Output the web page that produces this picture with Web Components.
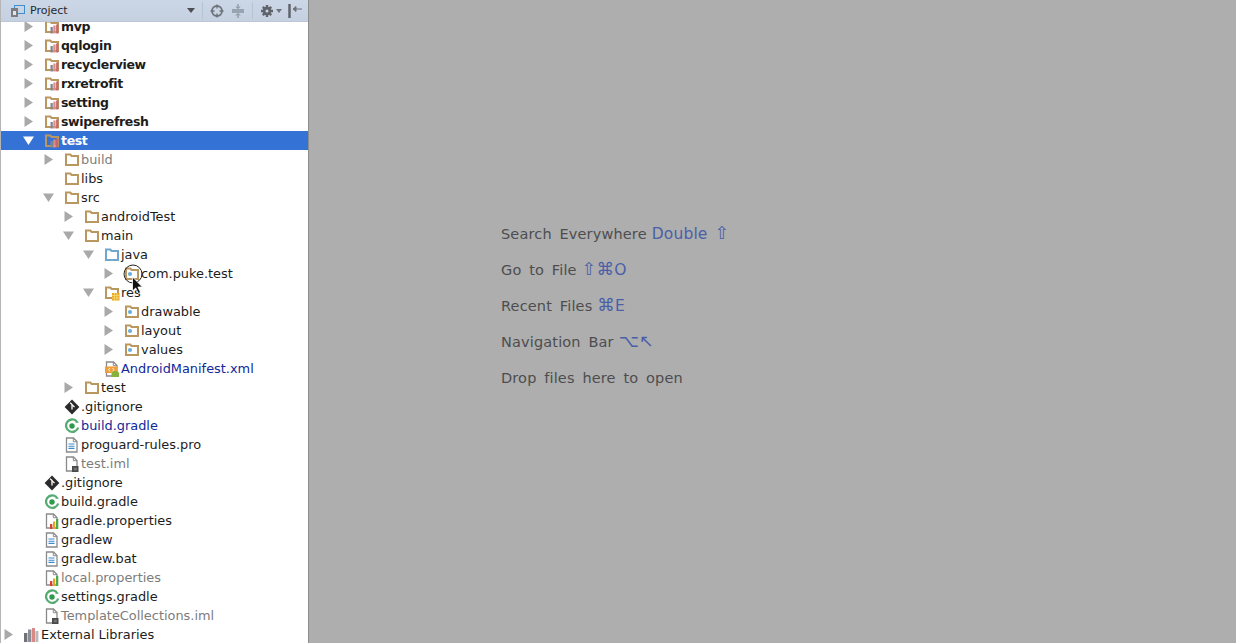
<!DOCTYPE html>
<html>
<head>
<meta charset="utf-8">
<title>Project</title>
<style>
html, body { margin: 0; height: 100%; overflow: hidden; background: #aeaeae; }
</style>
</head>
<body>
<ide-window>
  <project-panel>
    <tree-row depth="1" arrow="right" icon="module" bold>mvp</tree-row>
    <tree-row depth="1" arrow="right" icon="module" bold>qqlogin</tree-row>
    <tree-row depth="1" arrow="right" icon="module" bold>recyclerview</tree-row>
    <tree-row depth="1" arrow="right" icon="module" bold>rxretrofit</tree-row>
    <tree-row depth="1" arrow="right" icon="module" bold>setting</tree-row>
    <tree-row depth="1" arrow="right" icon="module" bold>swiperefresh</tree-row>
    <tree-row depth="1" arrow="down" icon="module" bold selected>test</tree-row>
    <tree-row depth="2" arrow="right" icon="folder" tone="muted">build</tree-row>
    <tree-row depth="2" icon="folder">libs</tree-row>
    <tree-row depth="2" arrow="down" icon="folder">src</tree-row>
    <tree-row depth="3" arrow="right" icon="folder">androidTest</tree-row>
    <tree-row depth="3" arrow="down" icon="folder">main</tree-row>
    <tree-row depth="4" arrow="down" icon="source">java</tree-row>
    <tree-row depth="5" arrow="right" icon="package">com.puke.test</tree-row>
    <tree-row depth="4" arrow="down" icon="res">res</tree-row>
    <tree-row depth="5" arrow="right" icon="package">drawable</tree-row>
    <tree-row depth="5" arrow="right" icon="package">layout</tree-row>
    <tree-row depth="5" arrow="right" icon="package">values</tree-row>
    <tree-row depth="4" icon="manifest" tone="blue">AndroidManifest.xml</tree-row>
    <tree-row depth="3" arrow="right" icon="folder">test</tree-row>
    <tree-row depth="2" icon="git">.gitignore</tree-row>
    <tree-row depth="2" icon="gradle" tone="blue">build.gradle</tree-row>
    <tree-row depth="2" icon="text">proguard-rules.pro</tree-row>
    <tree-row depth="2" icon="iml" tone="muted">test.iml</tree-row>
    <tree-row depth="1" icon="git">.gitignore</tree-row>
    <tree-row depth="1" icon="gradle">build.gradle</tree-row>
    <tree-row depth="1" icon="props">gradle.properties</tree-row>
    <tree-row depth="1" icon="text">gradlew</tree-row>
    <tree-row depth="1" icon="text">gradlew.bat</tree-row>
    <tree-row depth="1" icon="props" tone="muted">local.properties</tree-row>
    <tree-row depth="1" icon="gradle">settings.gradle</tree-row>
    <tree-row depth="1" icon="iml" tone="muted">TemplateCollections.iml</tree-row>
    <tree-row depth="0" arrow="right" icon="libs">External Libraries</tree-row>
  </project-panel>
  <welcome-pane>
    <hint-line key-text="Double ⇧">Search Everywhere</hint-line>
    <hint-line key-text="⇧⌘O">Go to File</hint-line>
    <hint-line key-text="⌘E">Recent Files</hint-line>
    <hint-line key-text="⌥↖">Navigation Bar</hint-line>
    <hint-line>Drop files here to open</hint-line>
  </welcome-pane>
</ide-window>

<script>
const UI_FONT = '"DejaVu Sans", "Liberation Sans", sans-serif';

// every tree icon is drawn in a 16x16 box
const FOLDER = (c) => `<path d="M2 4V2.500h4.300l1.300 1.500H14v9H2z" fill="none" stroke="${c}" stroke-width="2"/>`;
const PAGE = `<path d="M2.500 1h7l3.500 3.500V15H2.500z" fill="#fff" stroke="#8a8a8a" stroke-width="1.300"/><path d="M9.300 1v3.700H13" fill="none" stroke="#8a8a8a"/>`;
const ICONS = {
  folder: FOLDER('#b9975f'),
  source: FOLDER('#6fa8cc'),
  module: FOLDER('#b9975f') + `<rect x="6.500" y="8" width="2.300" height="6.500" fill="#85858d"/><rect x="9.300" y="6.500" width="2.300" height="8" fill="#dc8f88"/><rect x="12.100" y="5.500" width="2.300" height="9" fill="#c9696a"/>`,
  package: FOLDER('#b9975f') + `<circle cx="6" cy="8" r="2.100" fill="#6aaede"/>`,
  res: FOLDER('#b9975f') + `<rect x="8" y="8" width="7.500" height="7.500" fill="#e8a91c"/><path d="M8 10.500h7.500M8 13h7.500M10.500 8v7.500M13 8v7.500" stroke="#f6da7a" stroke-width=".8"/>`,
  git: `<path d="M8 .6 15.400 8 8 15.400.6 8z" fill="#2b2b2b"/><path d="M6.200 3.800 8 5.600v5M8 5.600l2.500 2.500" fill="none" stroke="#fff" stroke-width="1.300"/>`,
  gradle: `<path d="M12.400 3A6.200 6.200 0 1 0 14.200 9.500" fill="none" stroke="#55ab72" stroke-width="2.300"/><path d="M12 1.500l3 3-3.500 .6z" fill="#55ab72"/><circle cx="8" cy="8" r="2.700" fill="#2f9a4c"/>`,
  text: PAGE + `<path d="M4.500 7h6M4.500 9.200h6M4.500 11.400h6" stroke="#3d8ad0" stroke-width="1.100"/>`,
  iml: PAGE + `<rect x="8" y="10" width="6.500" height="6" fill="#4a4a4a"/><rect x="9.800" y="11.800" width="3" height="2.500" fill="#777"/>`,
  props: PAGE + `<rect x="6" y="11" width="2.300" height="5" fill="#d9402f"/><rect x="9" y="8.500" width="2.300" height="7.500" fill="#e6a520"/><rect x="12" y="6" width="2.300" height="10" fill="#4fa84f"/>`,
  manifest: PAGE + `<rect x="1" y="5.500" width="12" height="6.500" fill="#ef9f3a"/><path d="M6 7 4.500 8.700 6 10.400M8.500 7 10 8.700 8.500 10.400" fill="none" stroke="#fff" stroke-width=".9"/><path d="M7.500 16v-3a3.800 3 0 0 1 7.600 0v3z" fill="#86b23a"/>`,
  libs: `<rect x="0" y="6" width="3.400" height="9" fill="#70707a"/><rect x="4" y="2.500" width="3.400" height="12.500" fill="#8d8d95"/><rect x="8" y="1" width="3" height="14" fill="#d98a84"/><rect x="11.400" y="4" width="3" height="11" fill="#b9b9bf"/>`
};

class IdeWindow extends HTMLElement {
  constructor() {
    super();
    this.attachShadow({ mode: 'open' });
    this.shadowRoot.innerHTML = `
      <style>
        :host { display: flex; height: 643px; font-family: ${UI_FONT}; overflow: hidden; }
      </style>
      <slot></slot>
    `;
  }
}

class ProjectPanel extends HTMLElement {
  constructor() {
    super();
    this.attachShadow({ mode: 'open' });
    this.shadowRoot.innerHTML = `
      <style>
        :host {
          display: flex; flex-direction: column; flex: none; position: relative;
          width: 307px; height: 643px; overflow: hidden; background: #fff;
          border-left: 1px solid #b5b5b5; border-right: 1px solid #8c8c8c;
        }
        header {
          flex: none; height: 21px; z-index: 1; display: flex; align-items: center;
          background: linear-gradient(#cbd6e6, #c5d0e1); border-bottom: 1px solid #bcc6d6;
          font-size: 11px; color: #26282c;
        }
        header svg { flex: none; display: block; }
        .title { margin-left: 4px; flex: 1; }
        .sep { flex: none; width: 1px; height: 17px; background: #b7c2d3; }
        .tree { flex: none; margin-top: -5px; }
        .cursor { position: absolute; left: 122px; top: 264px; pointer-events: none; }
      </style>
      <header>
        <svg width="16" height="14" viewBox="0 0 16 14" style="margin-left:9px">
          <rect x="4.500" y="1.500" width="10" height="8" fill="none" stroke="#3f8fd0"/>
          <rect x="1" y="4" width="7" height="9" fill="#7d7d7d"/><rect x="3" y="7" width="3" height="4" fill="#dfe5ee"/>
        </svg>
        <span class="title">Project</span>
        <svg width="8" height="5" viewBox="0 0 8 5" style="margin-right:7px"><path d="M0 0h8L4 5z" fill="#4b4f55"/></svg>
        <span class="sep"></span>
        <svg width="14" height="14" viewBox="0 0 14 14" style="margin-left:7px">
          <circle cx="7" cy="7" r="5" fill="none" stroke="#6d737b" stroke-width="1.800"/>
          <path d="M7 .5v4M7 9.500v4M.5 7h4M9.500 7h4" stroke="#6d737b" stroke-width="1.300"/>
        </svg>
        <svg width="12" height="14" viewBox="0 0 12 14" style="margin-left:8px">
          <path d="M0 7h12" stroke="#9aa4b0" stroke-width="4"/>
          <path d="M6 0v4M6 10v4M4 2.500 6 4.500 8 2.500M4 11.500 6 9.500 8 11.500" fill="none" stroke="#7d858f"/>
        </svg>
        <span class="sep" style="margin-left:8px"></span>
        <svg width="14" height="14" viewBox="0 0 14 14" style="margin-left:7px">
          <path d="M7 1v12M1 7h12M2.800 2.800l8.400 8.400M11.200 2.800l-8.400 8.400" stroke="#5f646b" stroke-width="2.400"/>
          <circle cx="7" cy="7" r="4.200" fill="#5f646b"/><circle cx="7" cy="7" r="1.500" fill="#c8d3e3"/>
        </svg>
        <svg width="6" height="4" viewBox="0 0 6 4" style="margin-left:2px"><path d="M0 0h6L3 4z" fill="#6d737b"/></svg>
        <svg width="14" height="16" viewBox="0 0 14 16" style="margin:0 6px 0 6px">
          <path d="M1.500 1v14" stroke="#5f646b" stroke-width="2.500"/><path d="M5 6h9M5 6l3-2.500v5z" stroke="#6d737b" fill="#6d737b"/>
        </svg>
      </header>
      <div class="tree"><slot></slot></div>
      <svg class="cursor" width="24" height="34" viewBox="0 0 24 34">
        <circle cx="10" cy="10" r="9" fill="none" stroke="#222" stroke-width="1"/>
        <path d="M9.500 13v14l3.200-3 2.600 5.500 2.200-1-2.600-5.500h4.500z" fill="#111" stroke="#fff" stroke-width=".8"/>
      </svg>
    `;
  }
}

class TreeRow extends HTMLElement {
  connectedCallback() {
    if (this.shadowRoot) return;
    this.attachShadow({ mode: 'open' });
    const depth = Number(this.getAttribute('depth') || 0);
    const arrow = this.getAttribute('arrow');
    const icon = this.getAttribute('icon');
    const shape = arrow === 'down' ? 'M0 1.500h11L5.500 10z' : arrow === 'right' ? 'M1.500 0v11L10 5.500z' : '';
    this.shadowRoot.innerHTML = `
      <style>
        :host {
          display: flex; align-items: center; height: 19px; padding-left: ${3 + depth * 20}px;
          font-size: 12.900px; color: #1c1c1c; white-space: nowrap;
        }
        :host([bold]) { font-weight: bold; font-size: 12.500px; letter-spacing: -.35px; }
        :host([tone="muted"]) { color: #7c7c7c; }
        :host([tone="blue"]) { color: #10289a; }
        :host([selected]) { background: #3572d6; color: #fff; }
        .arrow { flex: none; width: 11px; height: 11px; margin: 0 10px 0 -1px; display: block; }
        .arrow path { fill: #a9a9a9; }
        :host([selected]) .arrow path { fill: #fff; }
        .icon { flex: none; width: 16px; height: 16px; margin-right: 1px; display: block; }
        span { display: block; }
      </style>
      <svg class="arrow" viewBox="0 0 11 11"><path d="${shape}"/></svg>
      <svg class="icon" viewBox="0 0 16 16">${ICONS[icon] || ''}</svg>
      <span><slot></slot></span>
    `;
  }
}

class WelcomePane extends HTMLElement {
  constructor() {
    super();
    this.attachShadow({ mode: 'open' });
    this.shadowRoot.innerHTML = `
      <style>
        :host {
          display: flex; flex-direction: column; flex: 1; gap: 14px;
          padding: 223px 0 0 192px; background: #aeaeae; box-sizing: border-box; height: 643px;
        }
      </style>
      <slot></slot>
    `;
  }
}

class HintLine extends HTMLElement {
  connectedCallback() {
    if (this.shadowRoot) return;
    this.attachShadow({ mode: 'open' });
    // the mac key symbols are drawn bigger than the letters
    const keyText = (this.getAttribute('key-text') || '').replace(/[⇧⌘⌥↖]/g, '<i>$&</i>');
    this.shadowRoot.innerHTML = `
      <style>
        :host {
          display: flex; align-items: baseline; gap: 5px; height: 22px; line-height: 22px; font-size: 14.500px;
          letter-spacing: .15px; word-spacing: 3px; color: #4d4d4f; white-space: nowrap;
        }
        b { font-weight: normal; color: #4a5fa8; font-size: 15.500px; word-spacing: 2px; }
        i { font-style: normal; font-size: 17.500px; line-height: 1; }
      </style>
      <span><slot></slot></span><b>${keyText}</b>
    `;
  }
}

customElements.define('ide-window', IdeWindow);
customElements.define('project-panel', ProjectPanel);
customElements.define('tree-row', TreeRow);
customElements.define('welcome-pane', WelcomePane);
customElements.define('hint-line', HintLine);
</script>
</body>
</html>
